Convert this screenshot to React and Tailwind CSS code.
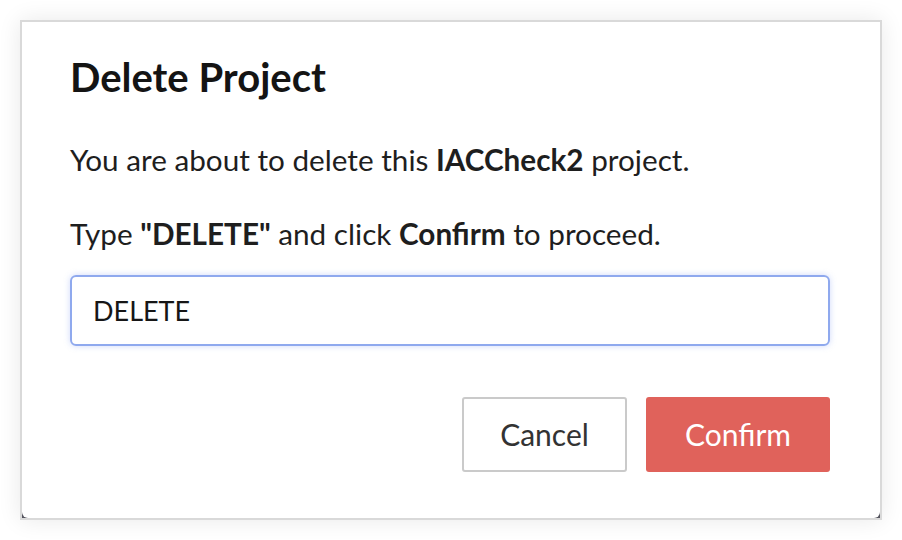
export default function App() {
  return (
    <div className="w-[902px] h-[540px] bg-white p-[20px]" style={{ fontFamily: 'Lato, "Open Sans", sans-serif' }}>
      <div className="w-[862px] h-[500px] border-2 border-[#d9d9d9] bg-[#55555f] shadow-[0_0_22px_rgba(0,0,0,0.09)]">
        <div className="w-full h-full bg-white rounded-b-[6px] flex flex-col pl-[48px] pr-[50px] pt-[31px]">
          <h1 className="text-[40px] leading-[1.2] font-bold text-[#141414]">Delete Project</h1>
          <p className="mt-[41px] text-[29.7px] leading-[1.2] text-[#1e1e1e]">
            You are about to delete this <b className="font-bold">IACCheck2</b> project.
          </p>
          <p className="mt-[38px] text-[29.7px] leading-[1.2] text-[#1e1e1e]">
            Type <b className="font-bold">"DELETE"</b> and click <b className="font-bold">Confirm</b> to proceed.
          </p>
          <input
            readOnly
            value="DELETE"
            className="mt-[24px] h-[71px] w-full rounded-[6px] border-2 border-[#8fa9ee] px-[21px] text-[27px] text-[#161616] outline-none shadow-[0_0_6px_rgba(120,150,240,0.35)]"
            style={{ fontFamily: 'Lato, "Open Sans", sans-serif' }}
          />
          <div className="mt-[51px] flex justify-end gap-[19px]">
            <button className="w-[165px] h-[75px] rounded-[3px] border-2 border-[#cacaca] bg-white text-[30px] text-[#333]">Cancel</button>
            <button className="w-[184px] h-[75px] rounded-[3px] bg-[#e0625b] text-[30px] text-white">Confirm</button>
          </div>
        </div>
      </div>
    </div>
  );
}
